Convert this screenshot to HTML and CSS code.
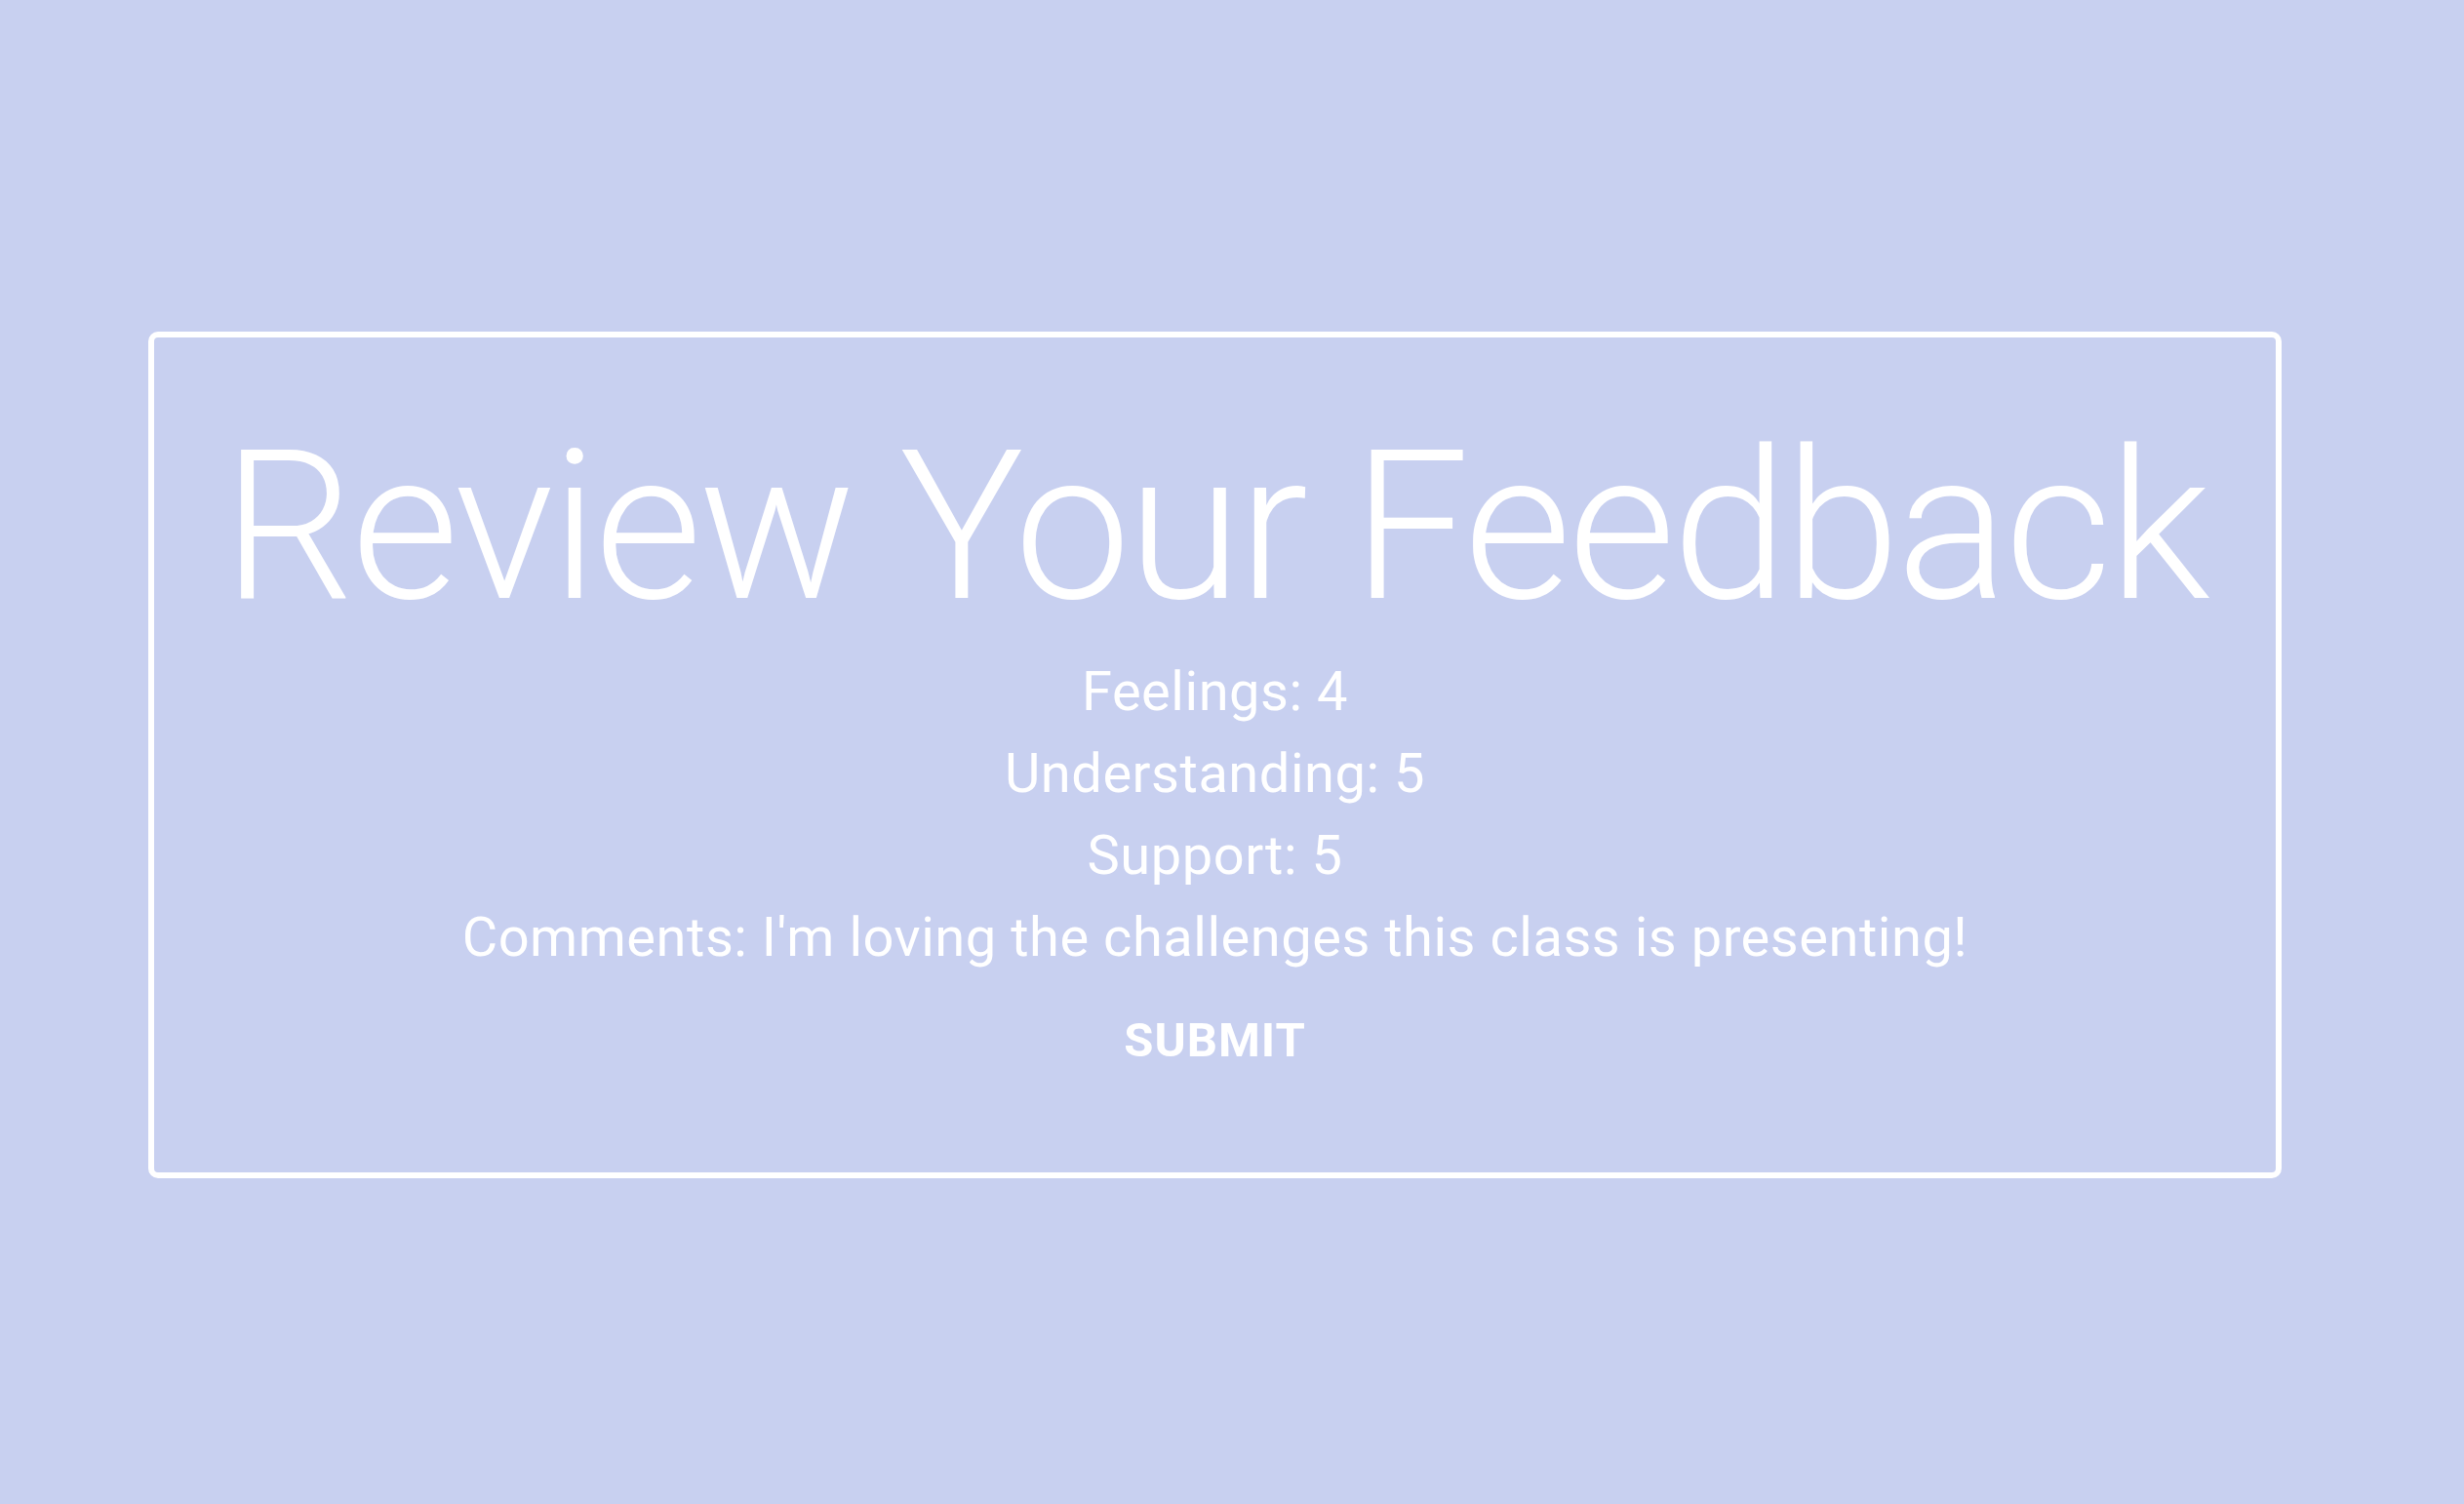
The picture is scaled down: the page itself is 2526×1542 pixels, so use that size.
FILE: index.html
```html
<!DOCTYPE html>
<html>
<head>
<meta charset="utf-8">
<link rel="stylesheet" href="styles.css">
</head>
<body>
<div class="page">
  <div class="card">
    <h1 class="title">Review Your Feedback</h1>
    <div class="lines">
      <p class="line">Feelings: 4</p>
      <p class="line">Understanding: 5</p>
      <p class="line">Support: 5</p>
      <p class="line">Comments: I'm loving the challenges this class is presenting!</p>
    </div>
    <button class="submit">Submit</button>
  </div>
</div>
</body>
</html>
```

FILE: styles.css
```css
html, body {
  margin: 0;
  padding: 0;
  background: #c8d0f0;
  height: 100%;
}
.page {
  padding-top: 340px;
  padding-left: 152px;
  font-family: Roboto, "Liberation Sans", sans-serif;
  color: #ffffff;
}
.card {
  box-sizing: border-box;
  width: 2187px;
  height: 868px;
  border: 6px solid #ffffff;
  border-radius: 10px;
  text-align: center;
  padding-top: 69px;
}
.title {
  margin: 0 0 2px 0;
  font-size: 213px;
  font-weight: 300;
  line-height: normal;
  letter-spacing: -0.01562em;
}
.lines {
  display: flex;
  flex-direction: column;
}
.line {
  margin: 0;
  font-size: 56px;
  line-height: 84px;
  font-weight: 400;
  letter-spacing: 0.00938em;
}
.submit {
  margin-top: 21px;
  background: transparent;
  border: none;
  color: #ffffff;
  font-family: Roboto, "Liberation Sans", sans-serif;
  font-weight: 700;
  font-size: 49px;
  line-height: 1.75;
  letter-spacing: 0.02em;
  text-transform: uppercase;
  padding: 0 16px;
  cursor: pointer;
}
```
